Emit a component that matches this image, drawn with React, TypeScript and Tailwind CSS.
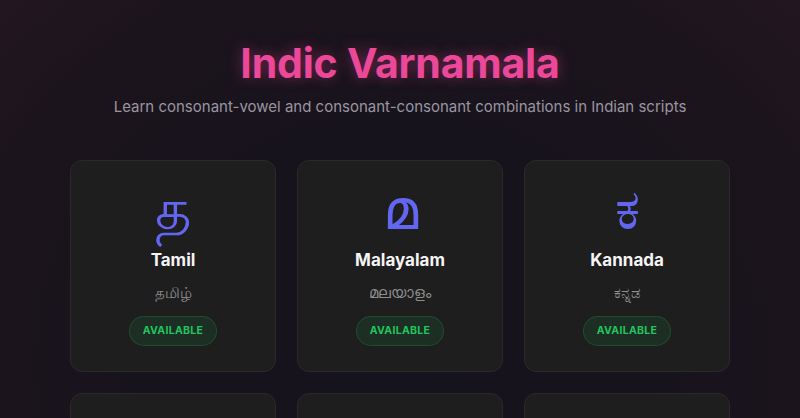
import React from "react";

const langs = [
  { glyph: "த", name: "Tamil", native: "தமிழ்" },
  { glyph: "മ", name: "Malayalam", native: "മലയാളം" },
  { glyph: "ಕ", name: "Kannada", native: "ಕನ್ನಡ" },
  { glyph: "", name: "", native: "" },
  { glyph: "", name: "", native: "" },
  { glyph: "", name: "", native: "" },
];

export default function App() {
  return (
    <div
      className="min-h-[418px] w-full overflow-hidden"
      style={{
        fontFamily: "Inter, 'Noto Sans', sans-serif",
        background:
          "radial-gradient(ellipse at 50% 60%, #15131d 0%, #17131d 45%, #1c141c 80%, #221620 100%)",
      }}
    >
      <div className="mx-auto flex w-[660px] flex-col items-center pt-[37px]">
        <h1
          className="text-[41px] font-bold leading-[52px] tracking-[-0.2px] text-[#ec4899]"
          style={{ textShadow: "0 0 14px rgba(236,72,153,0.45)" }}
        >
          Indic Varnamala
        </h1>
        <p className="mt-[6px] text-[15px] leading-6 text-[#9a96a0]">
          Learn consonant-vowel and consonant-consonant combinations in Indian scripts
        </p>
        <div className="mt-[41px] grid w-full grid-cols-3 gap-[21px]">
          {langs.map((l, i) => (
            <div
              key={i}
              className="flex h-[212px] flex-col items-center rounded-xl border border-[#2a2a2a] bg-[#1e1e1e] pt-[18px]"
            >
              {l.name && (
                <>
                  <div
                    className="flex h-[56px] items-center text-[56px] leading-none text-[#6366f1]"
                    style={{ fontFamily: "'Noto Sans', sans-serif" }}
                  >
                    {l.glyph}
                  </div>
                  <div className="mt-[13px] text-[17px] font-bold leading-6 text-[#f5f5f5]">
                    {l.name}
                  </div>
                  <div
                    className="mt-[10px] text-[15px] leading-5 text-[#8f8f8f]"
                    style={{ fontFamily: "'Noto Sans', sans-serif" }}
                  >
                    {l.native}
                  </div>
                  <div className="mt-[14px] flex h-[30px] items-center rounded-full border border-[#22c55e]/20 bg-[#22c55e]/10 px-[13px] text-[10.5px] font-bold tracking-[0.3px] text-[#22c55e]">
                    AVAILABLE
                  </div>
                </>
              )}
            </div>
          ))}
        </div>
      </div>
    </div>
  );
}
